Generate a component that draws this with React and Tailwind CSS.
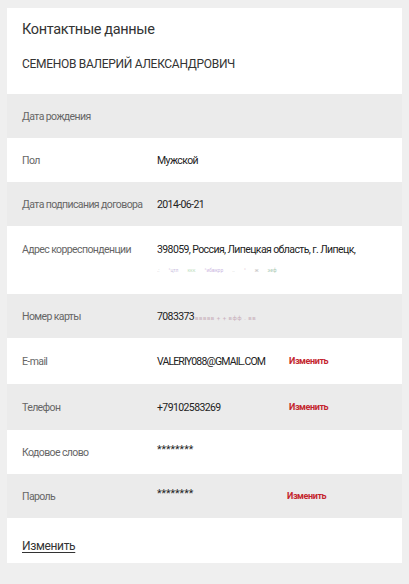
import React from "react";

const Row = ({ label, value, action, bg, h = "h-[44px]", actionClass = "w-[132px]" }) => (
  <div className={`flex items-center ${h} ${bg} pl-[15px] pt-[2px]`}>
    <div className="w-[135px] shrink-0 whitespace-nowrap text-[10.5px] text-[#666] tracking-[-0.6px]">{label}</div>
    <div className={`${actionClass} shrink-0 whitespace-nowrap text-[10.5px] text-[#222] tracking-[-0.6px]`}>{value}</div>
    {action && (
      <div className="text-[9px] font-bold text-[#c4262e] tracking-[-0.4px]">{action}</div>
    )}
  </div>
);

export default function App() {
  return (
    <div className="min-h-[584px] bg-[#efefef] pt-[8px] pl-[7px] pr-[7px]" style={{ fontFamily: "Roboto, 'Noto Sans', sans-serif" }}>
      <div className="w-[395px]">
        <div className="bg-white h-[86px] pl-[15px] pt-[12px]">
          <div className="text-[14.5px] leading-[20px] text-[#333] tracking-[-0.35px]">Контактные данные</div>
          <div className="mt-[16px] text-[12px] leading-[16px] text-[#333] tracking-[-0.3px]">СЕМЕНОВ ВАЛЕРИЙ АЛЕКСАНДРОВИЧ</div>
        </div>
        <Row label="Дата рождения" value="" bg="bg-[#ebebeb]" />
        <Row label="Пол" value="Мужской" bg="bg-white" />
        <Row label="Дата подписания договора" value="2014-06-21" bg="bg-[#ebebeb]" />
        <div className="flex items-start h-[68px] bg-white pl-[15px] pt-[16px]">
          <div className="w-[135px] shrink-0 whitespace-nowrap text-[10.5px] text-[#666] tracking-[-0.6px]">Адрес корреспонденции</div>
          <div className="flex flex-col">
            <div className="text-[10.5px] text-[#222] tracking-[-0.6px] whitespace-nowrap">398059, Россия, Липецкая область, г. Липецк,</div>
            <div className="mt-[8px] flex items-center gap-[9px] text-[5px] leading-[8px] opacity-60">
              <span className="text-[#99a]">.:</span>
              <span className="text-[#a9c]">°цтл</span>
              <span className="text-[#9c9]">ккк</span>
              <span className="text-[#a8c]">°ибвкрр</span>
              <span className="text-[#999]">..</span>
              <span className="text-[#c9a]">°</span>
              <span className="text-[#999]">ж</span>
              <span className="text-[#7a8]">эеф</span>
            </div>
          </div>
        </div>
        <Row
          label="Номер карты"
          value={
            <span className="flex items-center">
              7083373
              <span className="ml-[1px] text-[6px] text-[#b9a] opacity-70 tracking-[0.5px]">ввввв + + вфф . вв</span>
            </span>
          }
          bg="bg-[#ebebeb]"
        />
        <Row label="E-mail" value={<span className="tracking-[-0.85px]">VALERIY088@GMAIL.COM</span>} action="Изменить" bg="bg-white" h="h-[46px]" />
        <Row label="Телефон" value="+79102583269" action="Изменить" bg="bg-[#ebebeb]" h="h-[46px]" />
        <Row label="Кодовое слово" value={<span className="relative top-[-3px] tracking-normal">********</span>} bg="bg-white" />
        <Row label="Пароль" value={<span className="relative top-[-3px] tracking-normal">********</span>} action="Изменить" bg="bg-[#ebebeb]" actionClass="w-[130px]" />
        <div className="bg-white h-[45px] pl-[15px] pt-[15px]">
          <span className="text-[12px] text-[#333] tracking-[-0.35px] underline underline-offset-2">Изменить</span>
        </div>
      </div>
    </div>
  );
}
